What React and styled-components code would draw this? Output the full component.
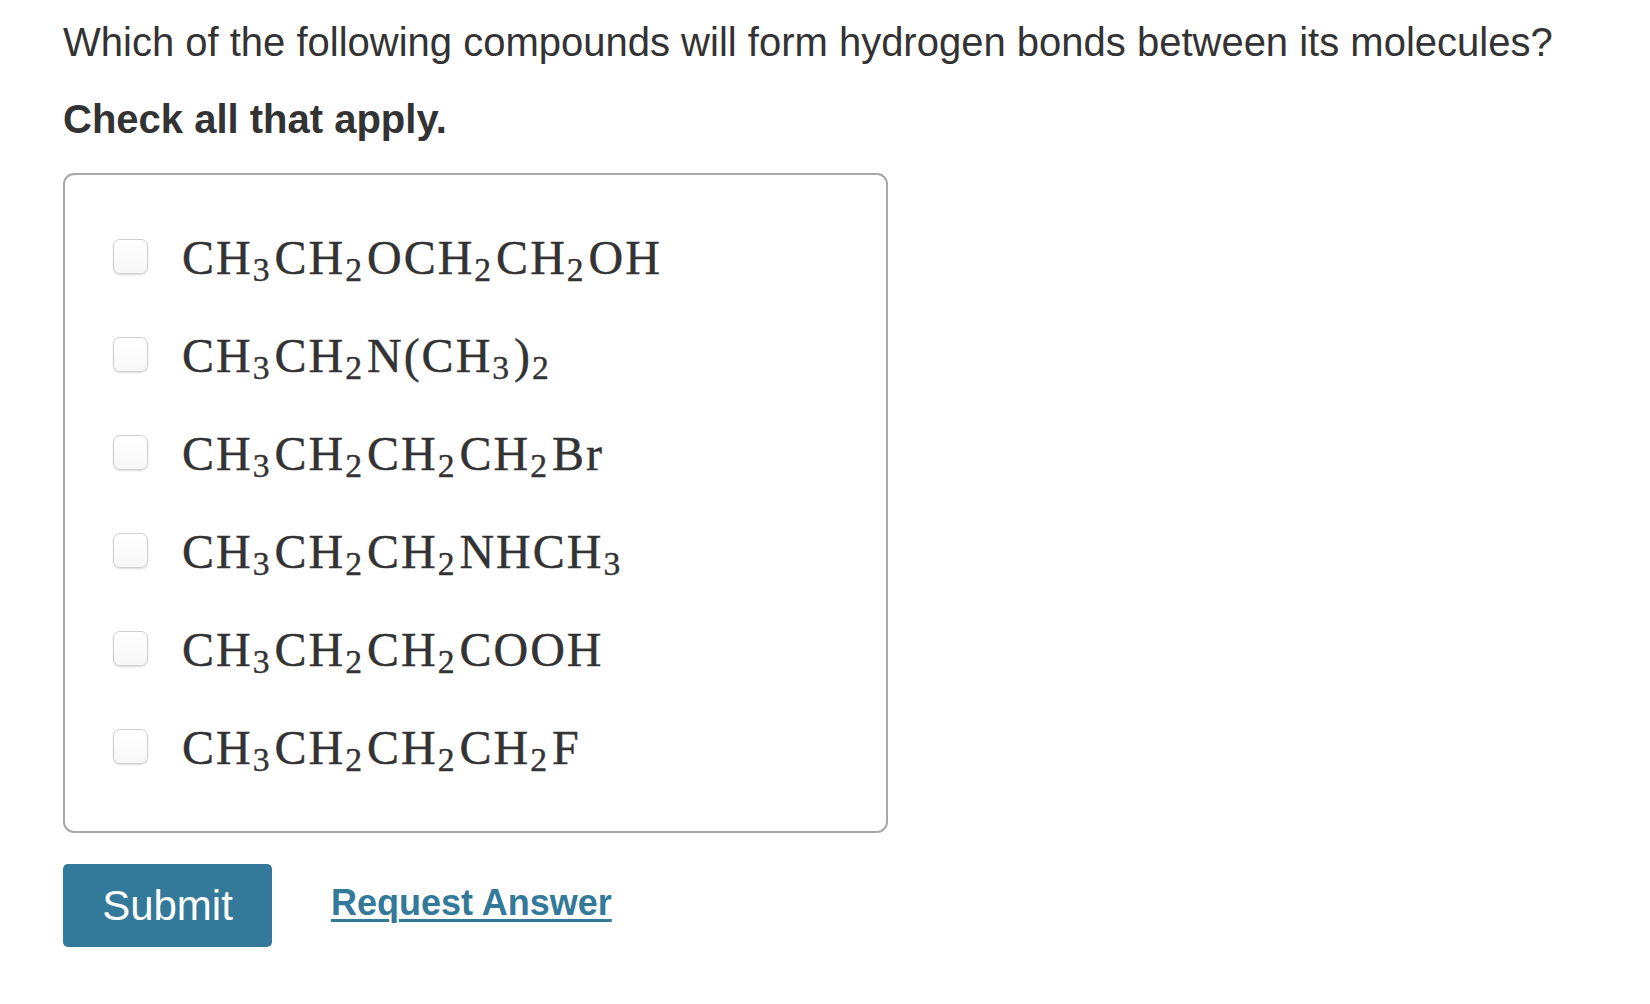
import React from "react";
import styled, { createGlobalStyle } from "styled-components";

const GlobalStyle = createGlobalStyle`
  html, body {
    margin: 0;
    padding: 0;
    background: #ffffff;
  }
  body {
    font-family: "Liberation Sans", Arial, Helvetica, sans-serif;
    color: #333333;
  }
`;

const Page = styled.main`
  padding: 18px 0 40px 63px;
  box-sizing: border-box;
  width: 1650px;
`;

const Prompt = styled.p`
  margin: 0;
  font-size: 40px;
  line-height: 48px;
  color: #333333;
`;

const Instruction = styled.p`
  margin: 29px 0 0;
  font-size: 40px;
  line-height: 48px;
  font-weight: 700;
  color: #333333;
`;

const ChoiceBox = styled.fieldset`
  margin: 30px 0 0;
  width: 825px;
  box-sizing: border-box;
  border: 2px solid #a8a8a8;
  border-radius: 11px;
  padding: 32px 0 36px 48px;
  display: flex;
  flex-direction: column;
`;

const Choice = styled.label`
  display: flex;
  align-items: center;
  height: 98px;
  gap: 34px;
  cursor: pointer;
`;

const Check = styled.span`
  flex: none;
  width: 35px;
  height: 35px;
  box-sizing: border-box;
  border: 1px solid #cfcfcf;
  border-radius: 7px;
  background: linear-gradient(#ffffff, #f7f7f7);
  box-shadow: 0 1px 2px rgba(0, 0, 0, 0.14), inset 0 1px 1px rgba(255, 255, 255, 0.9);
`;

const Formula = styled.span`
  padding-top: 4px;
  font-family: "Liberation Serif", "Times New Roman", serif;
  font-size: 48px;
  line-height: 48px;
  letter-spacing: 2px;
  color: #333333;
  -webkit-text-stroke: 0.4px #333333;
  white-space: nowrap;
`;

const Sub = styled.span`
  font-size: 0.7em;
  line-height: 0;
  vertical-align: -7px;
  margin-right: 3px;
`;

const Actions = styled.div`
  margin-top: 31px;
  display: flex;
  align-items: center;
  gap: 59px;
`;

const SubmitButton = styled.button`
  width: 209px;
  height: 83px;
  border: none;
  border-radius: 5px;
  background: #337999;
  color: #ffffff;
  font-family: "Liberation Sans", Arial, Helvetica, sans-serif;
  font-size: 42px;
  padding: 0;
  cursor: pointer;
`;

const AnswerLink = styled.a`
  display: inline-block;
  padding-bottom: 6px;
  font-family: "Liberation Sans", Arial, Helvetica, sans-serif;
  font-size: 36px;
  font-weight: 700;
  color: #337999;
  text-decoration: underline;
  text-underline-offset: 4px;
  text-decoration-thickness: 3px;
  cursor: pointer;
`;

// Each compound is a list of [text, subscript] pieces.
const compounds = [
  [["CH", "3"], ["CH", "2"], ["OCH", "2"], ["CH", "2"], ["OH"]],
  [["CH", "3"], ["CH", "2"], ["N(CH", "3"], [")", "2"]],
  [["CH", "3"], ["CH", "2"], ["CH", "2"], ["CH", "2"], ["Br"]],
  [["CH", "3"], ["CH", "2"], ["CH", "2"], ["NHCH", "3"]],
  [["CH", "3"], ["CH", "2"], ["CH", "2"], ["COOH"]],
  [["CH", "3"], ["CH", "2"], ["CH", "2"], ["CH", "2"], ["F"]],
];

function ChemFormula({ parts }) {
  return (
    <Formula>
      {parts.map(([text, sub], i) => (
        <React.Fragment key={i}>
          {text}
          {sub && <Sub>{sub}</Sub>}
        </React.Fragment>
      ))}
    </Formula>
  );
}

export default function App() {
  return (
    <>
      <GlobalStyle />
      <Page>
        <Prompt>
          Which of the following compounds will form hydrogen bonds between its molecules?
        </Prompt>
        <Instruction>Check all that apply.</Instruction>
        <ChoiceBox>
          {compounds.map((parts, i) => (
            <Choice key={i}>
              <Check />
              <ChemFormula parts={parts} />
            </Choice>
          ))}
        </ChoiceBox>
        <Actions>
          <SubmitButton type="button">Submit</SubmitButton>
          <AnswerLink>Request Answer</AnswerLink>
        </Actions>
      </Page>
    </>
  );
}
